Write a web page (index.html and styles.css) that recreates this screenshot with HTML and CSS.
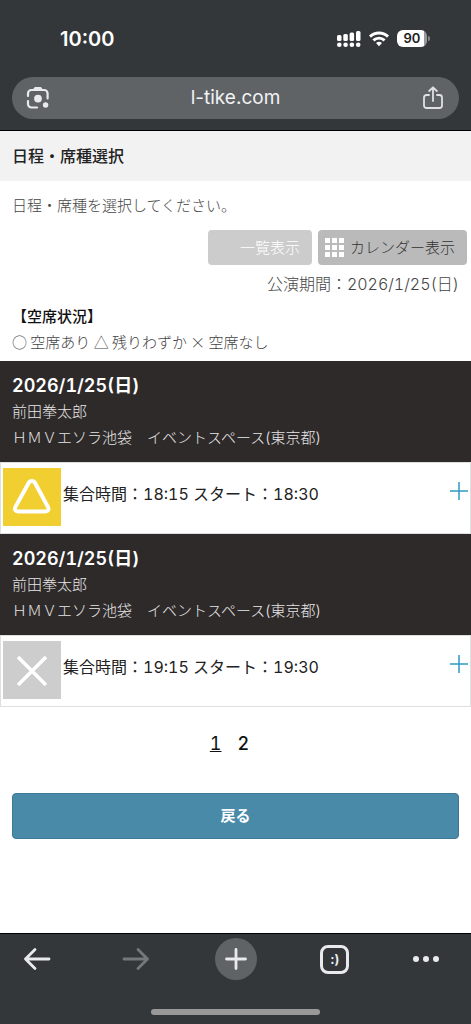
FILE: index.html
```html
<!DOCTYPE html>
<html lang="ja">
<head>
  <meta charset="UTF-8" />
  <meta name="viewport" content="width=device-width, initial-scale=1.0"/>
  <title>日程・席種選択</title>
  <link rel="stylesheet" href="styles.css">
</head>
<body>
  <header class="browser-top">
    <div class="status-bar">
      <span class="clock">10:00</span>
      <div class="status-icons">
        <svg width="24" height="18" viewBox="0 0 24 18" fill="#fff">
          <rect x="0" y="5" width="4.5" height="6" rx="1.5"/>
          <rect x="6.3" y="4" width="4.5" height="7" rx="1.5"/>
          <rect x="12.6" y="2.5" width="4.5" height="8.5" rx="1.5"/>
          <rect x="19" y="1" width="4.5" height="10" rx="1.5"/>
          <circle cx="2.3" cy="14.7" r="2.3"/>
          <circle cx="8.6" cy="14.7" r="2.3"/>
          <circle cx="14.9" cy="14.7" r="2.3"/>
          <circle cx="21.2" cy="14.7" r="2.3"/>
        </svg>
        <svg width="20" height="18" viewBox="0 0 20 18" fill="none" stroke="#fff" stroke-width="2.9">
          <path d="M1 6.6a13 13 0 0 1 18 0"/>
          <path d="M4.4 10.4a8 8 0 0 1 11.2 0"/>
          <path d="M10 16.2l-3-3.1a4.3 4.3 0 0 1 6 0z" fill="#fff" stroke="none"/>
        </svg>
        <div class="battery"><span class="battery-level">90</span></div>
      </div>
    </div>
    <div class="url-bar">
      <button class="icon-btn" type="button" aria-label="レンズ">
        <svg width="24" height="24" viewBox="0 0 24 24" fill="none" stroke="#e8eaed" stroke-width="2.2" stroke-linecap="round">
          <path d="M2 10V7.500A3.500 3.500 0 0 1 5.500 4h12.600a3.500 3.500 0 0 1 3.500 3.500V12.500"/>
          <path d="M2 15v3a3.500 3.500 0 0 0 3.500 3.500H11"/>
          <path d="M7.500 4l1.500-2.200h5.600L16.200 4z" fill="#e8eaed" stroke-width="1.500" stroke-linejoin="round"/>
          <circle cx="12" cy="12.600" r="3.900" fill="#e8eaed" stroke="none"/>
          <circle cx="19.600" cy="19" r="2.700" fill="#e8eaed" stroke="none"/>
        </svg>
      </button>
      <input class="url-text" type="text" value="l-tike.com" aria-label="アドレス">
      <button class="icon-btn" type="button" aria-label="共有">
        <svg width="20" height="24" viewBox="0 0 20 24" fill="none" stroke="#dfe1e5" stroke-width="1.8" stroke-linecap="round" stroke-linejoin="round">
          <path d="M6 9H3.500A2.500 2.500 0 0 0 1 11.500v8A2.500 2.500 0 0 0 3.500 22h13a2.500 2.500 0 0 0 2.500-2.500v-8A2.500 2.500 0 0 0 16.500 9H14"/>
          <path d="M10 15V1.500M6.200 5L10 1.300 13.800 5"/>
        </svg>
      </button>
    </div>
  </header>

  <main>
    <h1 class="page-title">日程・席種選択</h1>
    <p class="lead">日程・席種を選択してください。</p>

    <div class="view-switch">
      <button class="view-btn view-list" type="button" disabled>一覧表示</button>
      <button class="view-btn view-calendar" type="button">
        <svg width="20" height="20" viewBox="0 0 20 20" fill="#fff">
          <path d="M0 0h5v5H0zM7 0h5v5H7zM14 0h5v5h-5zM0 7h5v5H0zM7 7h5v5H7zM14 7h5v5h-5zM0 14h5v5H0zM7 14h5v5H7zM14 14h5v5h-5z"/>
        </svg>
        カレンダー表示
      </button>
    </div>
    <p class="period">公演期間：2026/1/25(日)</p>

    <div class="legend">
      <h2>【空席状況】</h2>
      <p>○ 空席あり △ 残りわずか × 空席なし</p>
    </div>

    <section class="event">
      <div class="event-info">
        <h3>2026/1/25(日)</h3>
        <p>前田拳太郎</p>
        <p>ＨＭＶエソラ池袋　イベントスペース(東京都)</p>
      </div>
      <button class="event-row" type="button" aria-expanded="false">
        <svg class="seat few" width="58" height="58" viewBox="0 0 58 58">
          <path d="M25.500 15.200L12.600 38.600c-1.500 2.900-.400 5 2.600 5h27c3 0 4.100-2.100 2.600-5L32.200 15.200c-1.700-3-5-3-6.700 0z" fill="none" stroke="#fff" stroke-width="4"/>
        </svg>
        <span class="event-time">集合時間：18:15 スタート：18:30</span>
        <svg class="plus" width="20" height="20" viewBox="0 0 20 20" stroke="#2f9bc4" stroke-width="1.500">
          <path d="M1 10h18M10 1v18"/>
        </svg>
      </button>
    </section>

    <section class="event">
      <div class="event-info">
        <h3>2026/1/25(日)</h3>
        <p>前田拳太郎</p>
        <p>ＨＭＶエソラ池袋　イベントスペース(東京都)</p>
      </div>
      <button class="event-row" type="button" aria-expanded="false">
        <svg class="seat none" width="58" height="58" viewBox="0 0 58 58">
          <path d="M15 16l28 28M43 16L15 44" fill="none" stroke="#fff" stroke-width="3.500"/>
        </svg>
        <span class="event-time">集合時間：19:15 スタート：19:30</span>
        <svg class="plus" width="20" height="20" viewBox="0 0 20 20" stroke="#2f9bc4" stroke-width="1.500">
          <path d="M1 10h18M10 1v18"/>
        </svg>
      </button>
    </section>

    <nav class="pager">
      <a class="current" href="#">1</a>
      <a href="#">2</a>
    </nav>

    <button class="back-btn" type="button">戻る</button>
  </main>

  <footer class="browser-bottom">
    <div class="toolbar">
      <button class="tool-btn" type="button" aria-label="戻る">
        <svg width="28" height="24" viewBox="0 0 28 24" fill="none" stroke="#e8eaed" stroke-width="2.800" stroke-linecap="round" stroke-linejoin="round">
          <path d="M26 12H2.500M12 2.500L2.500 12l9.500 9.500"/>
        </svg>
      </button>
      <button class="tool-btn" type="button" aria-label="進む" disabled>
        <svg width="28" height="24" viewBox="0 0 28 24" fill="none" stroke="#75787b" stroke-width="2.800" stroke-linecap="round" stroke-linejoin="round">
          <path d="M2 12h23.500M16 2.500l9.500 9.500-9.500 9.500"/>
        </svg>
      </button>
      <button class="tool-btn new-tab" type="button" aria-label="新しいタブ">
        <svg width="24" height="24" viewBox="0 0 24 24" fill="none" stroke="#e8eaed" stroke-width="2.800" stroke-linecap="round">
          <path d="M2.500 12h19M12 2.500v19"/>
        </svg>
      </button>
      <button class="tool-btn" type="button" aria-label="タブ一覧"><span class="tabs">:)</span></button>
      <button class="tool-btn menu" type="button" aria-label="メニュー">
        <svg width="26" height="8" viewBox="0 0 26 8" fill="#e8eaed">
          <circle cx="3" cy="4" r="3"/>
          <circle cx="13" cy="4" r="3"/>
          <circle cx="23" cy="4" r="3"/>
        </svg>
      </button>
    </div>
    <div class="home-indicator"></div>
  </footer>
</body>
</html>
```
FILE: styles.css
```css
* {
  margin: 0;
  padding: 0;
  box-sizing: border-box;
}
body {
  display: flex;
  flex-direction: column;
  min-height: 100vh;
  background: #fff;
  color: #444;
  font-family: Inter, "Noto Sans CJK JP", sans-serif;
  font-size: 15px;
  font-weight: 300;
  line-height: 26px;
}
button,
input {
  border: none;
  background: none;
  color: inherit;
  font: inherit;
}
svg {
  display: block;
  flex: none;
}

/* ブラウザ上部 */
.browser-top {
  padding: 0 12px 11px;
  background: #34373a;
  border-bottom: 1px solid #000;
}
.status-bar {
  display: flex;
  align-items: center;
  justify-content: space-between;
  height: 77px;
  padding: 0 32px 0 48px;
}
.clock {
  color: #fff;
  font-size: 20px;
  font-weight: 600;
}
.status-icons {
  display: flex;
  align-items: center;
  gap: 8px;
}
.battery {
  position: relative;
  width: 30px;
  height: 17px;
  border-radius: 6px;
  background: linear-gradient(to right, #fff 90%, #999 90%);
}
.battery::after {
  content: "";
  position: absolute;
  top: 6px;
  right: -3px;
  width: 2px;
  height: 5px;
  border-radius: 0 2px 2px 0;
  background: #888;
}
.battery-level {
  display: block;
  color: #222;
  font-size: 13px;
  font-weight: 600;
  line-height: 17px;
  text-align: center;
}
.url-bar {
  display: flex;
  align-items: center;
  height: 42px;
  padding: 0 14px;
  border-radius: 21px;
  background: #5f6366;
}
.icon-btn {
  display: flex;
  flex: none;
  justify-content: center;
  width: 24px;
}
.url-text {
  flex: 1;
  min-width: 0;
  color: #f1f3f4;
  font-size: 19px;
  font-weight: 400;
  text-align: center;
}

/* 本文 */
.page-title {
  padding: 12px;
  background: #f2f2f2;
  color: #222;
  font-size: 16px;
  font-weight: 500;
}
.lead {
  padding: 12px 12px 0;
}
.view-switch {
  display: flex;
  justify-content: flex-end;
  gap: 6px;
  padding: 11px 4px 0;
}
.view-btn {
  display: flex;
  align-items: center;
  gap: 5px;
  height: 35px;
  border-radius: 4px;
}
.view-list {
  padding: 0 12px 0 32px;
  background: #ccc;
  color: #fff;
}
.view-calendar {
  padding: 0 12px 0 7px;
  background: #bababa;
  color: #333;
}
.period {
  padding: 6px 12px 0;
  font-size: 16px;
  font-variant-numeric: tabular-nums;
  text-align: right;
}
.legend {
  padding: 6px 12px;
  font-family: "Noto Sans CJK JP", sans-serif;
}
.legend h2 {
  color: #111;
  font-size: 15px;
  font-weight: 500;
}
.event-info {
  padding: 12px 12px 11px;
  background: #2e2a2a;
  color: #e6e6e6;
}
.event-info h3 {
  color: #fff;
  font-size: 18px;
  font-variant-numeric: tabular-nums;
  font-weight: 600;
}
.event-row {
  display: flex;
  align-items: flex-start;
  width: 100%;
  padding: 5px 1px 7px 2px;
  border: 1px solid #dde0df;
  color: #222;
  text-align: left;
}
.seat.few {
  background: #f1cf30;
}
.seat.none {
  background: #cdcdcd;
}
.event-time {
  flex: 1;
  padding: 13px 2px 0;
  font-size: 16px;
  font-variant-numeric: tabular-nums;
  font-weight: 400;
}
.plus {
  margin-top: 13px;
}
.pager {
  display: flex;
  justify-content: center;
  gap: 16px;
  padding: 24px 24px 36px 12px;
}
.pager a {
  color: #111;
  font-size: 18px;
  font-variant-numeric: tabular-nums;
  font-weight: 500;
  text-decoration: none;
}
.pager .current {
  font-weight: 400;
  text-decoration: underline;
  text-decoration-thickness: 1px;
}
.back-btn {
  display: block;
  width: calc(100% - 24px);
  height: 46px;
  margin: 0 12px 24px;
  border: 1px solid #3d7894;
  border-radius: 4px;
  background: #4a8aa9;
  color: #fff;
  font-weight: 700;
}

/* ブラウザ下部 */
.browser-bottom {
  margin-top: auto;
  padding-bottom: 9px;
  background: #34373a;
  border-top: 1px solid #000;
}
.toolbar {
  display: flex;
  align-items: center;
  justify-content: space-between;
  padding: 4px 16px 0;
}
.tool-btn {
  display: flex;
  align-items: center;
  justify-content: center;
  width: 42px;
  height: 42px;
}
.tool-btn.menu {
  justify-content: flex-start;
}
.new-tab {
  border-radius: 50%;
  background: #5f6366;
}
.tabs {
  width: 29px;
  height: 29px;
  border: 3px solid #e8eaed;
  border-radius: 8px;
  color: #e8eaed;
  font-size: 13px;
  font-weight: 700;
  line-height: 22px;
}
.home-indicator {
  width: 36%;
  height: 6px;
  margin: 29px auto 0;
  border-radius: 3px;
  background: #999;
}
```
